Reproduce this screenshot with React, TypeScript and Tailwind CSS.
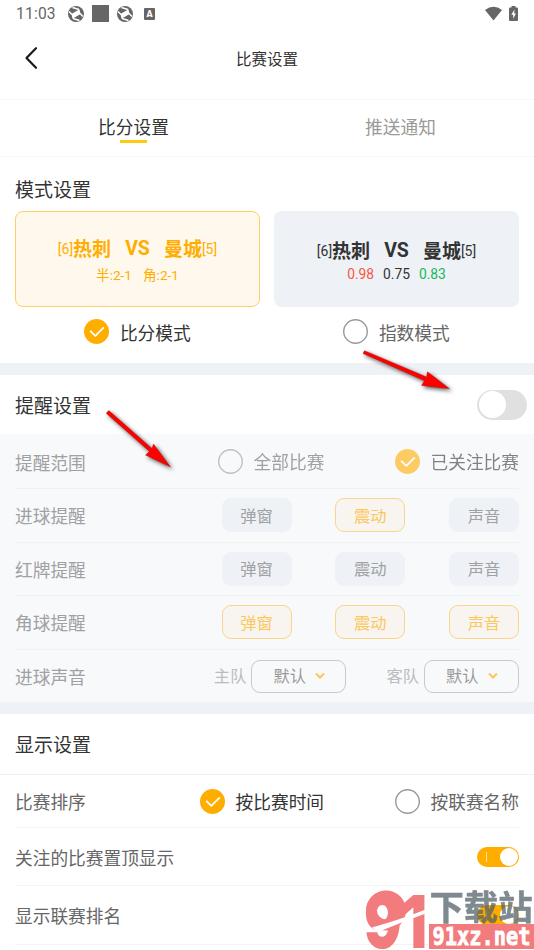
import type { ReactNode } from 'react';

type RadioProps = {
  label: string;
  checked?: boolean;
  muted?: boolean;
};

function Radio({ label, checked, muted }: RadioProps) {
  return (
    <div className={`flex items-center gap-[10.6px] ${muted ? 'opacity-60' : ''}`}>
      <svg className="w-[25px] h-[25px]" viewBox="0 0 25 25" fill="none">
        {checked ? (
          <>
            <circle cx="12.5" cy="12.5" r="12.5" fill="#ffae00" />
            <path d="M6.7 12.3l4.6 4.6 8-8" stroke="#fff" strokeWidth="1.8" strokeLinecap="round" strokeLinejoin="round" />
          </>
        ) : (
          <circle cx="12.5" cy="12.5" r="11.8" stroke="#999" strokeWidth="1.4" />
        )}
      </svg>
      <span className={`relative top-[2px] text-[17.7px] leading-6 ${checked ? 'text-[#333]' : 'text-[#666]'}`}>{label}</span>
    </div>
  );
}

function Chip({ label, active }: { label: string; active?: boolean }) {
  return (
    <div
      className={`w-[70px] h-[34px] pt-[3px] rounded-[9px] border flex items-center justify-center text-[16.3px] ${
        active ? 'bg-[#f8f4ef] border-[#fad58c] text-[#fbc85e]' : 'bg-[#eef1f6] border-[#eef1f6] text-[#a0a1a3]'
      }`}
    >
      {label}
    </div>
  );
}

function SoundSelect({ label }: { label: string }) {
  return (
    <div className="flex items-center gap-[5px]">
      <span className="pt-[2px] text-[16.3px] text-[#bbbcbd]">{label}</span>
      <div className="w-[95px] h-[33px] rounded-[9px] border border-[#c9cacc] flex items-center pl-[21px] text-[16.3px] text-[#999]">
        <span className="pt-[2px]">默认</span>
        <svg className="ml-[9px] w-[10px] h-[8px]" viewBox="0 0 10 8" fill="none" stroke="#fbc75c" strokeWidth="2">
          <path d="M1 1.5l4 4 4-4" />
        </svg>
      </div>
    </div>
  );
}

function Switch() {
  return (
    <div className="w-[42px] h-5 rounded-full bg-[#ffae00] flex items-center justify-between pl-[9px] pr-px">
      <span className="w-px h-[10px] bg-[#ffe0a0]" />
      <span className="w-[18px] h-[18px] rounded-full bg-white" />
    </div>
  );
}

function AlertRow({ label, last, children }: { label: string; last?: boolean; children: ReactNode }) {
  return (
    <div className={`h-[53.5px] flex items-center justify-between ${last ? '' : 'border-b border-[#f0f1f3]'}`}>
      <span className="pt-[5px] text-[17.7px] text-[#a0a1a3]">{label}</span>
      {children}
    </div>
  );
}

const alerts = [
  { label: '进球提醒', active: [false, true, false] },
  { label: '红牌提醒', active: [false, false, false] },
  { label: '角球提醒', active: [true, true, true] },
];
const channels = ['弹窗', '震动', '声音'];

function StatusBar() {
  return (
    <div className="h-7 pl-4 pr-[16px] flex items-center justify-between text-[#666]">
      <div className="flex items-center">
        <span className="w-[52px] pt-[2px] text-[15.6px] tracking-[0.2px]">11:03</span>
        {[0, 1].map((i) => (
          <div key={i} className="flex items-center">
            <svg className="w-4 h-4" viewBox="0 0 16 16">
              <circle cx="8" cy="8" r="8" fill="#666" />
              <path d="M11.500 3.300L12.600 8 4.500 12.700 3.400 8z" fill="#fff" />
              <path d="M11 3.500L4.500 1.500M12 7.500L15 10.500M5 12.500l6.500 2M4 8.500L1 5.500" stroke="#fff" strokeWidth="1.500" />
            </svg>
            {i === 0 && <span className="w-[17px] h-[17px] mx-2 bg-[#666]" />}
          </div>
        ))}
        <span className="ml-[11px] w-[11px] h-[12px] rounded-[1px] bg-[#666] text-white text-[9px] leading-[13px] font-black text-center">A</span>
      </div>
      <div className="flex items-center gap-[7px] relative -top-px">
        <svg className="w-[17px] h-[15px]" viewBox="0 0 17 15">
          <path d="M0 4Q8.500-2.500 17 4L8.500 14.500z" fill="#666" />
        </svg>
        <svg className="w-[9px] h-[15px]" viewBox="0 0 9 15">
          <path d="M2.500 0h4v1.500H8q1 0 1 1V14q0 1-1 1H1q-1 0-1-1V2.500q0-1 1-1h1.500z" fill="#666" />
          <path d="M5.500 3.500L2.300 8.800h1.900v4L6.900 7.500H5.200z" fill="#fff" />
        </svg>
      </div>
    </div>
  );
}

function Arrows() {
  return (
    <svg className="absolute left-0 top-0 w-[534px] h-[950px] pointer-events-none" viewBox="0 0 534 950">
      <g fill="#f00" stroke="#a01010" strokeWidth="0.4" className="drop-shadow-[2px_2px_2px_rgba(0,0,0,0.65)]">
        <path d="M106.200 413.200L108.800 410.500 152 448.500 153.500 444 170.500 467 145.500 455 149.500 451.500z" />
        <path d="M363 353.500L364.500 350.700 426.500 377 427.500 371.800 449.500 388.700 421.500 385.500 424.500 380.800z" />
      </g>
    </svg>
  );
}

function Watermark() {
  return (
    <div className="absolute left-[364px] top-[890px] w-[170px] h-[60px]">
      <svg className="w-[170px] h-[60px]" viewBox="0 0 170 60">
        <text x="0" y="58" textLength="63" lengthAdjust="spacingAndGlyphs" fontFamily="Inter" fontWeight="900" fontSize="73" fill="#f27b7e">
          91
        </text>
        <circle cx="22" cy="20.500" r="14.500" fill="none" stroke="#f27b7e" strokeWidth="11" />
        <path d="M8 37.500Q38 29 63 19V23Q36 33 14 42z" fill="#fff" />
        <text x="65.500" y="30" textLength="103" lengthAdjust="spacingAndGlyphs" fontFamily="Noto Sans CJK SC" fontWeight="700" fontSize="34" fill="#4f5e66" stroke="#4f5e66" strokeWidth="0.6" opacity="0.72">
          下载站
        </text>
        <rect x="65" y="34" width="105" height="25" fill="#f27b7e" />
        <text x="68.500" y="55" textLength="98" lengthAdjust="spacingAndGlyphs" fontFamily="DejaVu Sans Mono" fontWeight="700" fontSize="25" fill="#fff" stroke="#fff" strokeWidth="0.8">
          91xz.net
        </text>
      </svg>
    </div>
  );
}

export default function App() {
  return (
    <div className="relative w-[534px] h-[950px] overflow-hidden bg-white text-[#333] font-[Roboto,'Noto_Sans_CJK_SC',sans-serif]">
      <StatusBar />

      {/* Header */}
      <header className="h-[72px] pb-[11px] border-b border-[#f8f8f8] grid grid-cols-3 items-center">
        <svg className="ml-[24px] w-4 h-6" viewBox="0 0 16 24" fill="none" stroke="#1a1a1a" strokeWidth="2.200" strokeLinecap="round" strokeLinejoin="round">
          <path d="M12 2.200L2.500 12l9.500 9.800" />
        </svg>
        <h1 className="pt-[5px] text-center text-[15.500px]">比赛设置</h1>
      </header>

      {/* Tabs */}
      <nav className="h-[57px] grid grid-cols-2 text-center text-[17.700px] border-b border-[#f8f8f8]">
        <div className="flex flex-col items-center pt-[14px]">
          <span className="relative top-px leading-[26px]">比分设置</span>
          <span className="w-[27px] h-[2.500px] bg-[#ffcb0f]" />
        </div>
        <div className="pt-[15px] leading-[26px] text-[#999]">推送通知</div>
      </nav>

      {/* Match card mode */}
      <section className="h-[206px] px-[15px] pt-[19px]">
        <h2 className="relative top-px text-[19px] leading-[28px]">模式设置</h2>
        <div className="mt-[7px] grid grid-cols-2 gap-[14px]">
          <div className="h-[96px] rounded-lg border border-[#ffce66] bg-[#fff8ed] text-[#ffae00] pt-[24px] text-center">
            <div className="flex items-center justify-center leading-7">
              <span className="relative -top-px text-[14px]">[6]</span>
              <b className="text-[19px]">热刺</b>
              <b className="mx-[14px] relative -top-px text-[19.500px]">VS</b>
              <b className="text-[19px]">曼城</b>
              <span className="relative -top-px text-[14px]">[5]</span>
            </div>
            <div className="flex justify-center gap-[11px] text-[13.600px] leading-[22px]">
              <span>半:2-1</span>
              <span>角:2-1</span>
            </div>
          </div>
          <div className="h-[96px] rounded-lg bg-[#eef1f6] pt-[27px] text-center">
            <div className="flex items-center justify-center leading-7">
              <span className="relative -top-px text-[14px]">[6]</span>
              <b className="text-[19px]">热刺</b>
              <b className="mx-[14px] relative -top-px text-[19.500px]">VS</b>
              <b className="text-[19px]">曼城</b>
              <span className="relative -top-px text-[14px]">[5]</span>
            </div>
            <div className="flex justify-center gap-[9px] text-[13.800px] leading-[16px]">
              <span className="text-[#f5573e]">0.98</span>
              <span>0.75</span>
              <span className="text-[#13b957]">0.83</span>
            </div>
          </div>
        </div>
        <div className="mt-[12px] grid grid-cols-2 gap-[14px] justify-items-center">
          <Radio label="比分模式" checked />
          <Radio label="指数模式" />
        </div>
      </section>
      <div className="h-3 bg-[#eef1f6]" />

      {/* Alerts */}
      <section>
        <div className="h-[59px] pl-[15px] pr-[7px] flex items-center justify-between">
          <h2 className="pt-[5px] text-[19px]">提醒设置</h2>
          <div className="w-[50px] h-[30px] rounded-full bg-[#e0e0e0] p-[1.500px]">
            <div className="w-[27px] h-[27px] rounded-full bg-white" />
          </div>
        </div>
        <div className="h-[268px] bg-[#f8f9fb] px-[15px]">
          <div className="h-[55px] flex items-center justify-between border-b border-[#f0f1f3]">
            <span className="w-[203px] pt-[6px] text-[17.700px] text-[#a0a1a3]">提醒范围</span>
            <Radio label="全部比赛" muted />
            <span className="flex-1" />
            <Radio label="已关注比赛" checked muted />
          </div>
          {alerts.map((row) => (
            <AlertRow key={row.label} label={row.label}>
              <div className="flex gap-[43.700px]">
                {channels.map((name, i) => (
                  <Chip key={name} label={name} active={row.active[i]} />
                ))}
              </div>
            </AlertRow>
          ))}
          <AlertRow label="进球声音" last>
            <div className="flex gap-[40px]">
              <SoundSelect label="主队" />
              <SoundSelect label="客队" />
            </div>
          </AlertRow>
        </div>
      </section>
      <div className="h-3 bg-[#eef1f6]" />

      {/* Display */}
      <section>
        <h2 className="h-[61px] pl-[15px] text-[19px] leading-[63px] border-b border-[#f0f0f0]">显示设置</h2>
        <div className="px-[15px] text-[17.700px] text-[#666]">
          <div className="h-[53px] flex items-center justify-between border-b border-[#f3f3f3]">
            <span className="w-[185px] pt-[5px]">比赛排序</span>
            <Radio label="按比赛时间" checked />
            <span className="flex-1" />
            <Radio label="按联赛名称" />
          </div>
          <div className="h-[58px] flex items-center justify-between border-b border-[#f3f3f3]">
            <span className="pt-[5px]">关注的比赛置顶显示</span>
            <Switch />
          </div>
          <div className="h-[59px] flex items-center justify-between border-b border-[#f3f3f3]">
            <span className="pt-[5px]">显示联赛排名</span>
            <Switch />
          </div>
        </div>
      </section>

      <Arrows />
      <Watermark />
    </div>
  );
}
